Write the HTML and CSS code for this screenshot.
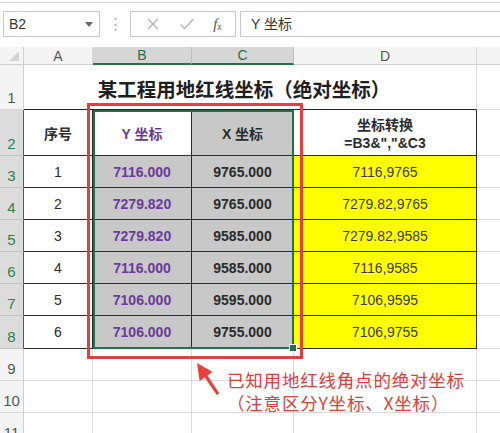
FILE: index.html
```html
<!DOCTYPE html>
<html lang="zh-CN">
<head>
<meta charset="utf-8">
<title>某工程用地红线坐标</title>
<link rel="stylesheet" href="styles.css">
</head>
<body>
<div class="topline"></div>
<div class="toolbar">
  <div class="namebox"><span>B2</span><svg class="dd" width="8" height="5" viewBox="0 0 8 5"><path d="M0 0H8L4 5Z" fill="#666"/></svg></div>
  <div class="dots">⋮</div>
  <div class="btns">
    <svg class="btn" width="14" height="14" viewBox="0 0 14 14"><path d="M2 2L12 12M12 2L2 12" stroke="#b5b5b5" stroke-width="1.4" fill="none"/></svg>
    <svg class="btn" width="16" height="14" viewBox="0 0 16 14"><path d="M1.5 7.5L5.5 11.5L14.5 2" stroke="#b5b5b5" stroke-width="1.4" fill="none"/></svg>
    <span class="fx">f<sub>x</sub></span>
  </div>
  <div class="formula">Y 坐标</div>
</div>

<div class="sheet">
  <div class="grid">
    <div class="corner"><svg width="10" height="10" viewBox="0 0 10 10"><path d="M10 0V10H0Z" fill="#d4d4d4"/></svg></div>
    <div class="ch">A</div>
    <div class="ch sel">B</div>
    <div class="ch sel">C</div>
    <div class="ch">D</div>
    <div class="ch last"></div>

    <div class="rh">1</div>
    <div class="c title">某工程用地红线坐标（绝对坐标）</div>
    <div class="c e"></div>

    <div class="rh sel">2</div>
    <div class="c t bold">序号</div>
    <div class="c t bold purple">Y 坐标</div>
    <div class="c t bold gray">X 坐标</div>
    <div class="c t bold two">坐标转换<br>=B3&amp;","&amp;C3</div>
    <div class="c e"></div>

    <div class="rh sel">3</div>
    <div class="c t">1</div>
    <div class="c t bold purple gray">7116.000</div>
    <div class="c t bold gray">9765.000</div>
    <div class="c t yellow">7116,9765</div>
    <div class="c e"></div>

    <div class="rh sel">4</div>
    <div class="c t">2</div>
    <div class="c t bold purple gray">7279.820</div>
    <div class="c t bold gray">9765.000</div>
    <div class="c t yellow">7279.82,9765</div>
    <div class="c e"></div>

    <div class="rh sel">5</div>
    <div class="c t">3</div>
    <div class="c t bold purple gray">7279.820</div>
    <div class="c t bold gray">9585.000</div>
    <div class="c t yellow">7279.82,9585</div>
    <div class="c e"></div>

    <div class="rh sel">6</div>
    <div class="c t">4</div>
    <div class="c t bold purple gray">7116.000</div>
    <div class="c t bold gray">9585.000</div>
    <div class="c t yellow">7116,9585</div>
    <div class="c e"></div>

    <div class="rh sel">7</div>
    <div class="c t">5</div>
    <div class="c t bold purple gray">7106.000</div>
    <div class="c t bold gray">9595.000</div>
    <div class="c t yellow">7106,9595</div>
    <div class="c e"></div>

    <div class="rh sel">8</div>
    <div class="c t">6</div>
    <div class="c t bold purple gray">7106.000</div>
    <div class="c t bold gray">9755.000</div>
    <div class="c t yellow">7106,9755</div>
    <div class="c e"></div>

    <div class="rh">9</div>
    <div class="c"></div><div class="c"></div><div class="c"></div><div class="c"></div><div class="c e"></div>

    <div class="rh">10</div>
    <div class="c"></div><div class="c"></div><div class="c"></div><div class="c"></div><div class="c e"></div>

    <div class="rh">11</div>
    <div class="c"></div><div class="c"></div><div class="c"></div><div class="c"></div><div class="c e"></div>
  </div>

  <div class="selbox"></div>
  <div class="handle"></div>
  <div class="redbox"></div>
  <svg class="arrow" width="500" height="386" viewBox="0 0 500 386">
    <polygon points="197,316 212.6,324.9 207.4,328.6 219.3,346.2 216.7,348.0 204.8,330.4 199.6,334.1" fill="#e8403a"/>
  </svg>
  <div class="note">
    <div>已知用地红线角点的绝对坐标</div>
    <div>（注意区分Y坐标、X坐标）</div>
  </div>
</div>
</body>
</html>
```

FILE: styles.css
```css
* { box-sizing: border-box; }
html, body {
  margin: 0;
  padding: 0;
  background: #fff;
  overflow: hidden;
  width: 500px;
  height: 433px;
}
body {
  font-family: "Liberation Sans", "Noto Sans CJK SC", sans-serif;
  color: #222;
}
.topline {
  height: 3px;
  border-bottom: 1px solid #d6d6d6;
}
.toolbar {
  height: 44px;
  display: flex;
  align-items: flex-start;
  padding-top: 8px;
  padding-left: 3px;
}
.namebox {
  width: 97px;
  height: 26px;
  border: 1px solid #c8c8c8;
  display: flex;
  align-items: center;
  justify-content: space-between;
  padding: 0 6px 0 5px;
  font-size: 14px;
  color: #333;
}
.dd { margin-top: 1px; }
.dots {
  width: 30px;
  text-align: center;
  color: #aaa;
  font-size: 15px;
  line-height: 26px;
}
.btns {
  width: 106px;
  height: 26px;
  border: 1px solid #c8c8c8;
  display: flex;
  align-items: center;
  justify-content: space-around;
  padding: 0 4px 0 6px;
}
.fx {
  font-family: "Liberation Serif", serif;
  font-style: italic;
  font-size: 15px;
  color: #555;
  line-height: 1;
}
.fx sub { font-size: 10px; vertical-align: -1px; }
.formula {
  flex: 1;
  margin-left: 4px;
  height: 26px;
  border: 1px solid #c8c8c8;
  border-right: none;
  font-size: 14px;
  line-height: 24px;
  padding-left: 10px;
  color: #333;
}

.sheet {
  position: relative;
  height: 386px;
}
.grid {
  display: grid;
  grid-template-columns: 24px 69px 99px 102px 183px 1fr;
  grid-template-rows: 18px 45px 46px 32px 32px 32px 32px 32px 33px 32px 32px 32px;
}
.grid > div {
  border-right: 1px solid #dadada;
  border-bottom: 1px solid #dadada;
  display: flex;
  align-items: center;
  justify-content: center;
  overflow: hidden;
}
.corner {
  background: #f4f4f4;
  justify-content: flex-end !important;
  align-items: flex-end !important;
  padding: 0 4px 3px 0;
  border-right-color: #cfcfcf !important;
  border-bottom-color: #cfcfcf !important;
}
.ch {
  background: #f4f4f4;
  font-size: 14px;
  color: #555;
  border-right-color: #d8d8d8 !important;
  border-bottom-color: #cfcfcf !important;
}
.ch.last { border-right: none !important; }
.ch.sel {
  background: #d6d6d6;
  color: #217346;
  border-bottom: 2px solid #217346 !important;
  border-right-color: #bdbdbd !important;
}
.rh {
  background: #f4f4f4;
  font-size: 15px;
  color: #555;
  align-items: flex-end !important;
  padding-bottom: 3px;
  border-right-color: #cfcfcf !important;
  border-bottom-color: #d6d6d6 !important;
}
.rh.sel {
  background: #dcdcdc;
  color: #2e7d4f;
  border-right: 1px solid #217346 !important;
  border-bottom-color: #c2c2c2 !important;
}
.c { font-size: 14px; }
.c.title {
  grid-column: span 4;
  font-family: "Noto Sans CJK SC", sans-serif;
  font-weight: 700;
  font-size: 19.5px;
  color: #1e1e1e;
  padding-top: 2px;
  padding-right: 12px;
  border-bottom: 1px solid #222 !important;
}
.c.t {
  border-right: 1px solid #2a2a2a !important;
  border-bottom: 1px solid #2a2a2a !important;
  color: #2b2b2b;
}
.bold { font-weight: 700; }
.purple { color: #6b3a98 !important; }
.gray { background: #c8c8c8; }
.yellow { background: #ffff00; color: #3a3a3a !important; }
.two {
  flex-direction: column;
  text-align: center;
  line-height: 18px;
  padding-top: 2px;
}
.c.e { border-right: none; }

.selbox {
  position: absolute;
  left: 93px;
  top: 63px;
  width: 201px;
  height: 239px;
  border: 2px solid #217346;
}
.handle {
  position: absolute;
  left: 290px;
  top: 298px;
  width: 6px;
  height: 6px;
  background: #217346;
  outline: 1px solid #fff;
}
.redbox {
  position: absolute;
  left: 87px;
  top: 56px;
  width: 216px;
  height: 256px;
  border: 3px solid #e04040;
}
.arrow {
  position: absolute;
  left: 0;
  top: 0;
  pointer-events: none;
}
.note {
  position: absolute;
  left: 227px;
  top: 321px;
  font-family: "Noto Sans CJK SC", sans-serif;
  font-size: 17.5px;
  letter-spacing: 0.8px;
  line-height: 23px;
  color: #d9403c;
  white-space: nowrap;
}
.note > div { height: 23px; overflow: visible; }
```
